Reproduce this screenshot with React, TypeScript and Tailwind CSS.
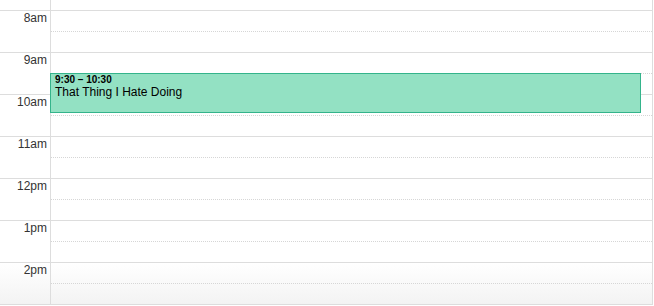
const hours = ["8am", "9am", "10am", "11am", "12pm", "1pm", "2pm"];

export default function App() {
  return (
    <div className="relative w-[653px] bg-white border-r border-[#dddddd] font-['Liberation_Sans',Arial,sans-serif] text-[#333333]">
      {/* tail of the 7am slot */}
      <div className="flex h-[10px]">
        <div className="w-[51px] border-r border-[#dddddd]" />
      </div>

      {hours.map((hour, i) => {
        const last = i === hours.length - 1;
        return (
          <div
            key={hour}
            className={`flex border-t border-[#dddddd] ${
              last ? "h-[43px] border-b bg-gradient-to-b from-white to-[#f3f3f3]" : "h-[42px]"
            }`}
          >
            <div className="w-[51px] border-r border-[#dddddd] pr-[3px] text-right text-[12px] leading-[14px]">
              {hour}
            </div>
            <div className="flex-1 flex flex-col">
              <div className="h-[20px]" />
              <div className="border-t border-dotted border-[#d6d6d6]" />
            </div>
          </div>
        );
      })}

      {/* event */}
      <div className="absolute left-[50px] top-[73px] w-[591px] h-[40px] bg-[#93e1c3] border border-[#34b48b] pl-[4px] text-black">
        <div className="text-[10px] leading-[11px] font-bold">9:30 – 10:30</div>
        <div className="text-[12px] leading-[14px]">That Thing I Hate Doing</div>
      </div>
    </div>
  );
}
